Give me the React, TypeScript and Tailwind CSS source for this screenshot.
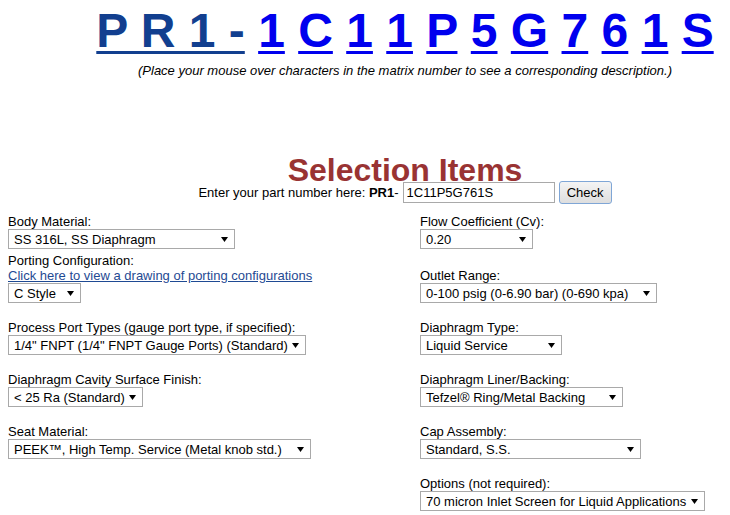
import React from "react";

const chars = ["1", "C", "1", "1", "P", "5", "G", "7", "6", "1", "S"];

function Sel({ value, w }: { value: string; w: string }) {
  return (
    <div
      className={`flex h-[20px] items-center justify-between border border-[#a9a9a9] bg-white pl-[5px] pr-[6px] text-[13px] leading-[15px] text-black ${w}`}
    >
      <span className="whitespace-nowrap">{value}</span>
      <svg width="7" height="5" viewBox="0 0 7 5" className="shrink-0">
        <polygon points="0,0 7,0 3.5,5" fill="#000" />
      </svg>
    </div>
  );
}

function Label({ children }: { children: React.ReactNode }) {
  return <div className="text-[13px] leading-[15px] text-black whitespace-nowrap">{children}</div>;
}

function Row({ left, right, cls = "" }: { left?: React.ReactNode; right?: React.ReactNode; cls?: string }) {
  return (
    <div className={`grid grid-cols-[412px_1fr] items-end ${cls}`}>
      <div>{left}</div>
      <div>{right}</div>
    </div>
  );
}

export default function App() {
  return (
    <div className="h-[515px] w-[730px] overflow-hidden bg-white font-['Liberation_Sans',Arial,sans-serif]">
      <div className="w-[810px]">
        <div className="mt-[3px] text-center text-[48px] font-bold leading-[55px] whitespace-nowrap">
          <span className="text-[#123f8f] underline decoration-[3px] underline-offset-[4px]">P R 1 -</span>
          {chars.map((c, i) => (
            <React.Fragment key={i}>
              {" "}
              <a href="#" className="text-[#0000ee] underline decoration-[3px] underline-offset-[4px]">
                {c}
              </a>
            </React.Fragment>
          ))}
        </div>
        <div className="mt-[5px] text-center text-[13px] italic leading-[15px] text-black">
          (Place your mouse over characters in the matrix number to see a corresponding description.)
        </div>

        <h1 className="mt-[81px] text-center text-[32px] font-bold leading-[22px] text-[#993333]">Selection Items</h1>
        <div className="mt-0 flex items-center justify-center text-[13px] leading-[15px] text-black">
          <span>
            Enter your part number here: <b>PR1</b>-
          </span>
          <div className="ml-[4px] flex h-[21px] w-[152px] items-center border border-[#a9a9a9] px-[3px]">1C11P5G761S</div>
          <button className="ml-[4px] h-[23px] w-[53px] rounded-[3px] border border-[#7fa6d6] bg-gradient-to-b from-[#f4f4f4] to-[#dedede] text-[13px]">
            Check
          </button>
        </div>

        <div className="mt-[10px] pl-[8px]">
          <Row
            left={
              <>
                <Label>Body Material:</Label>
                <Sel value="SS 316L, SS Diaphragm" w="w-[227px]" />
              </>
            }
            right={
              <>
                <Label>Flow Coefficient (Cv):</Label>
                <Sel value="0.20" w="w-[113px]" />
              </>
            }
          />
          <Row
            cls="mt-[4px]"
            left={
              <>
                <Label>Porting Configuration:</Label>
                <a href="#" className="block text-[13px] leading-[15px] text-[#1f4a93] underline">
                  Click here to view a drawing of porting configurations
                </a>
                <Sel value="C Style" w="w-[73px]" />
              </>
            }
            right={
              <>
                <Label>Outlet Range:</Label>
                <Sel value="0-100 psig (0-6.90 bar) (0-690 kpa)" w="w-[237px]" />
              </>
            }
          />
          <Row
            cls="mt-[17px]"
            left={
              <>
                <Label>Process Port Types (gauge port type, if specified):</Label>
                <Sel value={'1/4" FNPT (1/4" FNPT Gauge Ports) (Standard)'} w="w-[298px]" />
              </>
            }
            right={
              <>
                <Label>Diaphragm Type:</Label>
                <Sel value="Liquid Service" w="w-[142px]" />
              </>
            }
          />
          <Row
            cls="mt-[17px]"
            left={
              <>
                <Label>Diaphragm Cavity Surface Finish:</Label>
                <Sel value="< 25 Ra (Standard)" w="w-[135px]" />
              </>
            }
            right={
              <>
                <Label>Diaphragm Liner/Backing:</Label>
                <Sel value="Tefzel® Ring/Metal Backing" w="w-[203px]" />
              </>
            }
          />
          <Row
            cls="mt-[17px]"
            left={
              <>
                <Label>Seat Material:</Label>
                <Sel value="PEEK™, High Temp. Service (Metal knob std.)" w="w-[303px]" />
              </>
            }
            right={
              <>
                <Label>Cap Assembly:</Label>
                <Sel value="Standard, S.S." w="w-[221px]" />
              </>
            }
          />
          <Row
            cls="mt-[17px]"
            right={
              <>
                <Label>Options (not required):</Label>
                <Sel value="70 micron Inlet Screen for Liquid Applications" w="w-[285px]" />
              </>
            }
          />
        </div>
      </div>
    </div>
  );
}
